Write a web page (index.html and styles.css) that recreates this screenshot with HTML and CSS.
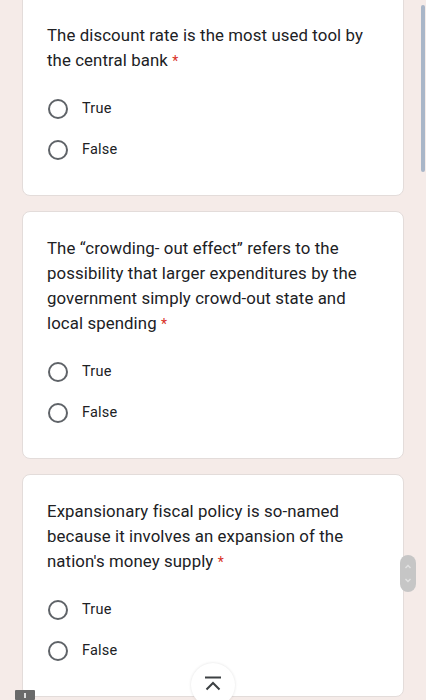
FILE: index.html
```html
<!DOCTYPE html>
<html>
<head>
<meta charset="utf-8">
<link rel="stylesheet" href="styles.css">
</head>
<body>
<div class="page">
  <div class="card first">
    <div class="q">The discount rate is the most used tool by the central bank <span class="req">*</span></div>
    <div class="opts">
      <div class="opt"><span class="radio"></span><span class="lbl">True</span></div>
      <div class="opt"><span class="radio"></span><span class="lbl">False</span></div>
    </div>
  </div>
  <div class="card">
    <div class="q">The “crowding- out effect” refers to the possibility that larger expenditures by the government simply crowd-out state and local spending <span class="req">*</span></div>
    <div class="opts">
      <div class="opt"><span class="radio"></span><span class="lbl">True</span></div>
      <div class="opt"><span class="radio"></span><span class="lbl">False</span></div>
    </div>
  </div>
  <div class="card">
    <div class="q">Expansionary fiscal policy is so-named because it involves an expansion of the nation's money supply <span class="req">*</span></div>
    <div class="opts">
      <div class="opt"><span class="radio"></span><span class="lbl">True</span></div>
      <div class="opt"><span class="radio"></span><span class="lbl">False</span></div>
    </div>
  </div>
</div>
<div class="scrollbar"></div>
<div class="pill">
  <svg width="16" height="37" viewBox="0 0 16 37"><path d="M5.5 13 L8 10.5 L10.5 13" fill="none" stroke="#e2e2e2" stroke-width="1.4"/><path d="M5.5 24 L8 26.5 L10.5 24" fill="none" stroke="#e2e2e2" stroke-width="1.4"/></svg>
</div>
<div class="topbtn">
  <svg width="20" height="16" viewBox="0 0 20 16"><path d="M2 1.5 H18" stroke="#3c4043" stroke-width="2"/><path d="M3.5 13.5 L10 7 L16.5 13.5" fill="none" stroke="#3c4043" stroke-width="2"/></svg>
</div>
<div class="corner"><span class="mark"></span></div>
</body>
</html>
```

FILE: styles.css
```css
html, body {
  margin: 0;
  padding: 0;
  background: #f5ebe8;
  overflow: hidden;
}
body {
  width: 426px;
  height: 700px;
  position: relative;
  font-family: Roboto, "Noto Sans", "Liberation Sans", sans-serif;
  color: #202124;
}
.page {
  padding: 0 22px;
  display: flex;
  flex-direction: column;
  gap: 15px;
}
.card {
  background: #fff;
  border: 1px solid #e3dcda;
  border-radius: 8px;
  padding: 24px 24px 25px;
}
.card.first {
  margin-top: -1px;
  padding-top: 23px;
  border-top-left-radius: 0;
  border-top-right-radius: 0;
}
.q {
  font-size: 16.8px;
  line-height: 25px;
  letter-spacing: 0.1px;
}
.req {
  color: #d93025;
  font-size: 14px;
  line-height: 1;
}
.opts {
  margin-top: 15px;
  display: flex;
  flex-direction: column;
}
.opt {
  height: 41px;
  display: flex;
  align-items: center;
}
.radio {
  width: 16px;
  height: 16px;
  border: 2px solid #5f6368;
  border-radius: 50%;
  flex: none;
  margin-left: 1px;
}
.lbl {
  margin-left: 14px;
  font-size: 14.5px;
  letter-spacing: 0.2px;
}
.scrollbar {
  position: absolute;
  left: 421px;
  top: 5px;
  width: 4px;
  height: 167px;
  background: #a9b6c8;
  border-radius: 2px;
}
.pill {
  position: absolute;
  left: 400px;
  top: 555px;
  width: 16px;
  height: 37px;
  background: #c6c6c6;
  border-radius: 8px;
  display: flex;
}
.topbtn {
  position: absolute;
  left: 191px;
  top: 663px;
  width: 44px;
  height: 44px;
  border-radius: 50%;
  background: #fff;
  box-shadow: 0 0 3px rgba(0,0,0,0.12);
  display: flex;
  justify-content: center;
  padding-top: 13px;
  box-sizing: border-box;
}
.corner {
  position: absolute;
  left: 15px;
  top: 690px;
  width: 20px;
  height: 10px;
  background: #6a6a6a;
  border-radius: 1px;
  display: flex;
  justify-content: center;
  align-items: center;
}
.mark {
  width: 2px;
  height: 5px;
  background: #ddd;
}
```
